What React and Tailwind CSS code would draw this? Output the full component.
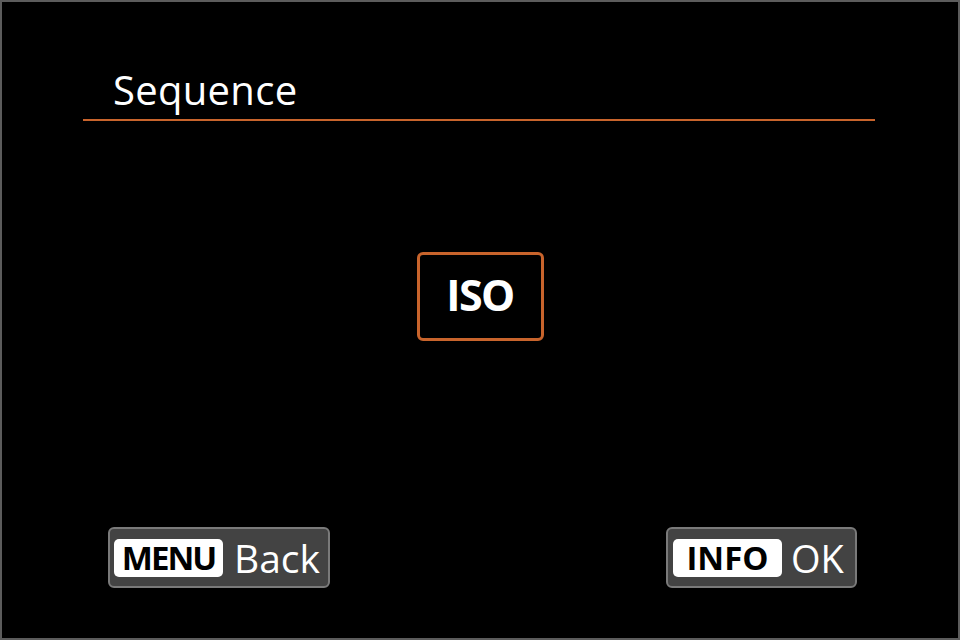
export default function App() {
  const font = { fontFamily: '"Open Sans", "Noto Sans", sans-serif' };
  return (
    <div className="w-[960px] h-[640px] bg-black border-2 border-[#5c5c5c] flex flex-col" style={font}>
      <div className="ml-[81px] mr-[83px] mt-[64px] border-b-2 border-[#c8642c] pl-[30px] h-[55px] flex items-end">
        <span className="text-white text-[40px] leading-none pb-[9px] tracking-[0.3px]">Sequence</span>
      </div>
      <div className="flex justify-center mt-[131px]">
        <div className="w-[127px] h-[89px] border-[3px] border-[#c8642c] rounded-[6px] flex items-center justify-center">
          <span className="text-white font-bold text-[43px] leading-none tracking-[-1.5px] -mt-[4px]">ISO</span>
        </div>
      </div>
      <div className="flex justify-between ml-[106px] mr-[101px] mt-[186px]">
        <div className="w-[222px] h-[61px] bg-[#434343] border-2 border-[#7a7a7a] rounded-[6px] flex items-center pl-[4px]">
          <div className="w-[109px] h-[38px] bg-white rounded-[5px] flex items-center justify-center">
            <span className="text-black font-bold text-[33px] leading-none tracking-[-2px]">MENU</span>
          </div>
          <span className="text-white text-[39px] leading-none ml-[11px]">Back</span>
        </div>
        <div className="w-[191px] h-[61px] bg-[#434343] border-2 border-[#7a7a7a] rounded-[6px] flex items-center pl-[5px]">
          <div className="w-[109px] h-[38px] bg-white rounded-[5px] flex items-center justify-center">
            <span className="text-black font-bold text-[33px] leading-none">INFO</span>
          </div>
          <span className="text-white text-[38px] leading-none ml-[9px]">OK</span>
        </div>
      </div>
    </div>
  );
}
